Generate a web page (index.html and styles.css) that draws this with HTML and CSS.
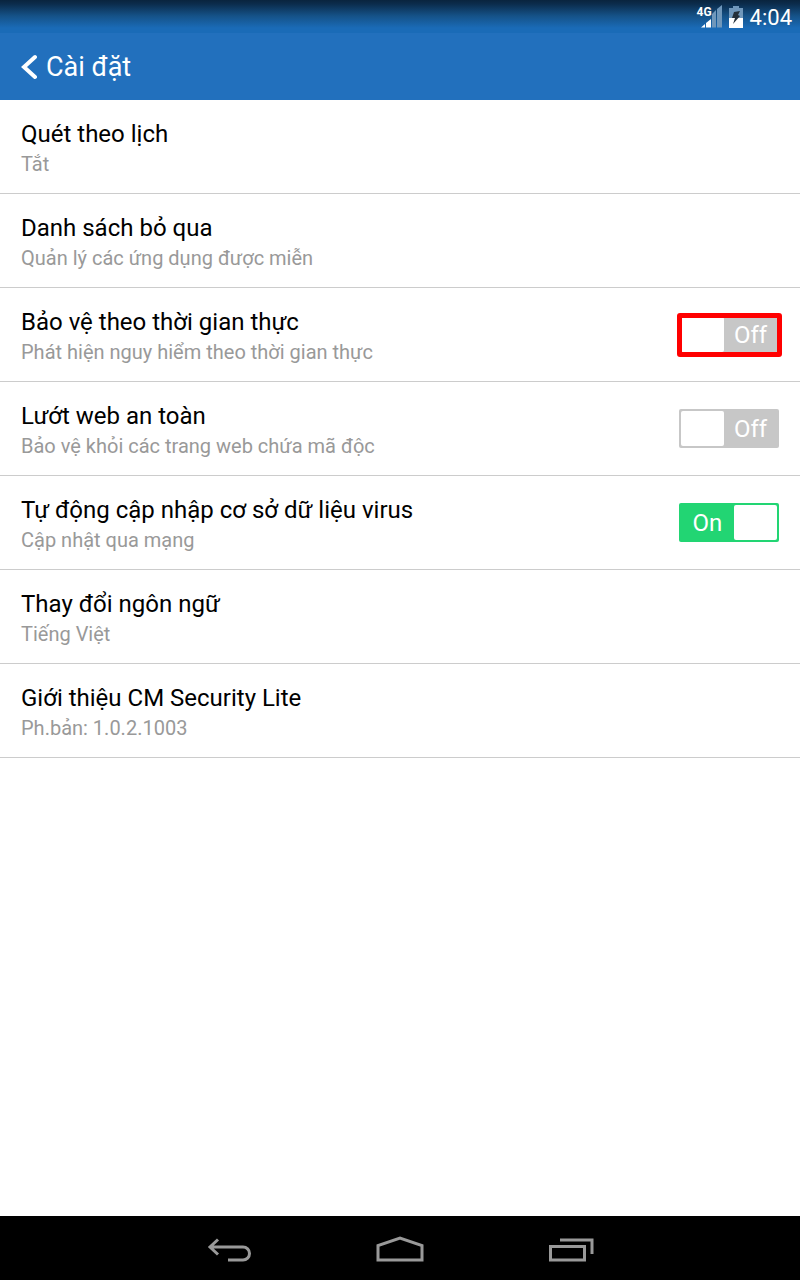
FILE: index.html
```html
<!DOCTYPE html>
<html lang="vi">
<head>
<meta charset="utf-8">
<meta name="viewport" content="width=device-width, initial-scale=1">
<title>Cài đặt</title>
<link rel="stylesheet" href="styles.css">
</head>
<body>
<div class="status-bar">
  <span class="signal">
    <span class="network">4G</span>
    <svg class="bars" viewBox="0 0 24 24" aria-hidden="true">
      <path d="M3 22.500L7 19V22.500ZM8 22.500V18L13 14V22.500Z" fill="#fff"/>
      <path d="M14 22.500V9L18 5V22.500ZM19 22.500V4L24 0V22.500Z" fill="#6f97bb"/>
    </svg>
  </span>
  <svg class="battery" viewBox="0 0 14 22" role="img" aria-label="Đang sạc">
    <path d="M4 0H10V2H14V12H0V2H4Z" fill="#6f97bb"/>
    <path d="M0 12H14V22H0Z" fill="#fff"/>
    <path d="M5 6L11 5L9 9L11 10L4 18L6 12L3 12Z" fill="#25303a"/>
  </svg>
  <span class="clock">4:04</span>
</div>
<header class="header">
  <button class="back" type="button"><svg class="chevron" viewBox="0 0 16 26" aria-hidden="true"><path d="M14 3L3 13L14 23" fill="none" stroke="#fff" stroke-width="4" stroke-linecap="round"/></svg>Cài đặt</button>
</header>
<main class="settings">
  <button class="row" type="button"><span class="text"><span class="title">Quét theo lịch</span><span class="note">Tắt</span></span></button>
  <button class="row" type="button"><span class="text"><span class="title">Danh sách bỏ qua</span><span class="note">Quản lý các ứng dụng được miễn</span></span></button>
  <label class="row"><span class="text"><span class="title">Bảo vệ theo thời gian thực</span><span class="note">Phát hiện nguy hiểm theo thời gian thực</span></span><span class="switch highlighted"><input class="toggle" type="checkbox" role="switch"><span class="state">Off</span></span></label>
  <label class="row"><span class="text"><span class="title">Lướt web an toàn</span><span class="note">Bảo vệ khỏi các trang web chứa mã độc</span></span><span class="switch"><input class="toggle" type="checkbox" role="switch"><span class="state">Off</span></span></label>
  <label class="row"><span class="text"><span class="title">Tự động cập nhập cơ sở dữ liệu virus</span><span class="note">Cập nhật qua mạng</span></span><span class="switch on"><input class="toggle" type="checkbox" role="switch" checked><span class="state">On</span></span></label>
  <button class="row" type="button"><span class="text"><span class="title">Thay đổi ngôn ngữ</span><span class="note">Tiếng Việt</span></span></button>
  <button class="row" type="button"><span class="text"><span class="title">Giới thiệu CM Security Lite</span><span class="note">Ph.bản: 1.0.2.1003</span></span></button>
</main>
<nav class="nav-bar">
  <button class="nav-button" type="button" aria-label="Quay lại"><svg class="nav-icon" viewBox="0 0 48 32" aria-hidden="true"><path d="M4 15H37A6.500 6.500 0 0 1 37 28H22M12 7.500L4 15L12 22.500"/></svg></button>
  <button class="nav-button" type="button" aria-label="Màn hình chính"><svg class="nav-icon" viewBox="0 0 48 32" aria-hidden="true"><path d="M2 28V13.500L24 6L46 13.500V28Z"/></svg></button>
  <button class="nav-button" type="button" aria-label="Ứng dụng gần đây"><svg class="nav-icon" viewBox="0 0 48 32" aria-hidden="true"><path d="M4.500 14.500H38.500V28H4.500ZM14 8H46V22"/></svg></button>
</nav>
</body>
</html>
```
FILE: styles.css
```css
* { box-sizing: border-box; }
body { margin: 0; min-height: 100vh; display: flex; flex-direction: column; font-family: Roboto, sans-serif; background: #fff; }
button { border: 0; background: none; font: inherit; text-align: left; cursor: pointer; }

.status-bar { height: 33px; background: linear-gradient(#09243e 0, #0b2c4c 4px, #155288 16px, #1a6bb7 28px, #1a6bb7 100%); color: #fff; display: flex; justify-content: flex-end; align-items: center; padding: 0 8px; }
.signal { position: relative; display: flex; margin-right: 7px; }
.bars { width: 24px; height: 24px; }
.network { position: absolute; left: -1px; top: 0; font-size: 12px; line-height: 14px; font-weight: 700; }
.battery { width: 14px; height: 22px; margin-right: 7px; }
.clock { padding-top: 2px; font-size: 22px; line-height: 28px; }

.header { height: 67px; background: #2270bd; display: flex; padding-left: 21px; }
.back { display: flex; align-items: center; gap: 9px; padding: 0; color: #fff; font-size: 27px; }
.chevron { width: 16px; height: 26px; }

.settings { flex: 1; display: flex; flex-direction: column; }
.row { display: flex; align-items: center; justify-content: space-between; gap: 16px; padding: 16px 21px 17px; border-bottom: 1px solid #ccc; cursor: pointer; }
.text { display: flex; flex-direction: column; }
.title { font-size: 24px; line-height: 36px; color: #000; }
.note { font-size: 20px; line-height: 24px; color: #999; }

.switch { position: relative; flex: none; display: flex; align-items: center; width: 100px; height: 39px; padding: 2px; border-radius: 2px; background: #c7c7c7; color: #fff; }
.switch.on { flex-direction: row-reverse; background: #22d573; }
.toggle { appearance: none; flex: none; width: 43px; height: 35px; margin: 0; border-radius: 2px; background: #fff; cursor: pointer; }
.state { flex: 1; padding-top: 2px; text-align: center; font-size: 24px; line-height: 33px; }
.highlighted::after { content: ""; position: absolute; inset: -2px -3px -3px -2px; border: 5px solid #f00; border-radius: 3px; }

.nav-bar { height: 64px; background: #000; display: flex; justify-content: center; }
.nav-button { width: 170px; display: flex; align-items: center; justify-content: center; padding: 0; }
.nav-icon { width: 48px; height: 32px; fill: none; stroke: #999; stroke-width: 3; }
```
